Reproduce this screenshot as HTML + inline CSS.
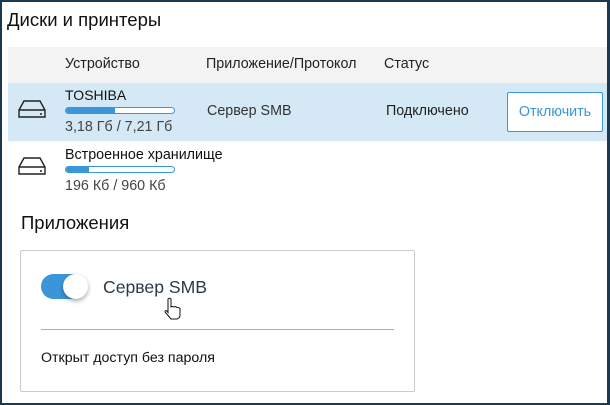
<!DOCTYPE html>
<html><head><meta charset="utf-8"><style>
*{margin:0;padding:0;box-sizing:border-box}
body{width:610px;height:405px;background:#fff;font-family:"Liberation Sans",sans-serif;position:relative;overflow:hidden;color:#222}
.frame{position:absolute;inset:0;border:2px solid #1b3a52;border-right-width:3px}
.a{position:absolute;white-space:nowrap}
.bar{position:absolute;width:110px;height:7px;border:1px solid #3a96d8;border-radius:4px;overflow:hidden;background:#fff}
.bar i{display:block;height:100%;background:#3a96d8}
.t{font-size:14.3px}
</style></head><body>
<div class="a" style="left:7px;top:9px;font-size:18.5px;color:#111">Диски и принтеры</div>
<div class="a" style="left:8px;top:47px;width:599px;height:36px;background:#f3f3f3"></div>
<div class="a t" style="left:65px;top:56px">Устройство</div>
<div class="a t" style="left:206px;top:56px">Приложение/Протокол</div>
<div class="a t" style="left:384px;top:56px">Статус</div>
<div class="a" style="left:8px;top:83px;width:599px;height:58px;background:#d4e8f5"></div>
<svg class="a" style="left:17px;top:98px" width="30" height="22" viewBox="0 0 30 22"><path d="M2 12 L7 3 H23 L28 12 V19 H2 Z M2 12 H28" fill="none" stroke="#222" stroke-width="1.4"/><circle cx="24" cy="16" r="1" fill="#222"/></svg>
<svg class="a" style="left:17px;top:155px" width="30" height="22" viewBox="0 0 30 22"><path d="M2 12 L7 3 H23 L28 12 V19 H2 Z M2 12 H28" fill="none" stroke="#222" stroke-width="1.4"/><circle cx="24" cy="16" r="1" fill="#222"/></svg>
<div class="a" style="left:65px;top:87px;font-size:14px;color:#111">TOSHIBA</div>
<div class="bar" style="left:65px;top:107px"><i style="width:45%"></i></div>
<div class="a t" style="left:65px;top:119px;color:#444">3,18 Гб / 7,21 Гб</div>
<div class="a t" style="left:207px;top:103px;color:#333">Сервер SMB</div>
<div class="a t" style="left:386px;top:103px;color:#222">Подключено</div>
<div class="a" style="left:507px;top:92px;width:96px;height:40px;border:1px solid #3a96d8;background:#fff;border-radius:2px;font-size:14.3px;color:#3a96d8;text-align:center;line-height:38px">Отключить</div>
<div class="a t" style="left:65px;top:147px;color:#111">Встроенное хранилище</div>
<div class="bar" style="left:65px;top:166px"><i style="width:21%"></i></div>
<div class="a t" style="left:65px;top:178px;color:#444">196 Кб / 960 Кб</div>
<div class="a" style="left:21px;top:212px;font-size:18.5px;color:#111">Приложения</div>
<div class="a" style="left:20px;top:250px;width:395px;height:142px;border:1px solid #ccc;border-radius:2px"></div>
<div class="a" style="left:41px;top:274px;width:46px;height:25px;border-radius:13px;background:#3a96d8"></div>
<div class="a" style="left:63px;top:274px;width:25px;height:25px;border-radius:50%;background:#fff;box-shadow:0 2px 4px rgba(0,0,0,.35)"></div>
<div class="a" style="left:103px;top:277px;font-size:17.6px;color:#2a3a4a">Сервер SMB</div>
<svg class="a" style="left:163px;top:297px" width="20" height="24" viewBox="0 0 20 24"><path d="M5 2 q1.5-1.5 3 0 V10 q1.5-1 3 0 q1.5-1 3 0.5 q1.5-0.5 3 1 V18 q0 3-3 4 H8 L2 15 q0-2 2-1 L5 15.5 Z" fill="#fff" stroke="#111" stroke-width="1"/></svg>
<div class="a" style="left:41px;top:329px;width:353px;height:1px;background:#7cc0ea"></div>
<div class="a" style="left:41px;top:350px;font-size:14.2px;color:#111">Открыт доступ без пароля</div>
<div class="frame"></div>
</body></html>
